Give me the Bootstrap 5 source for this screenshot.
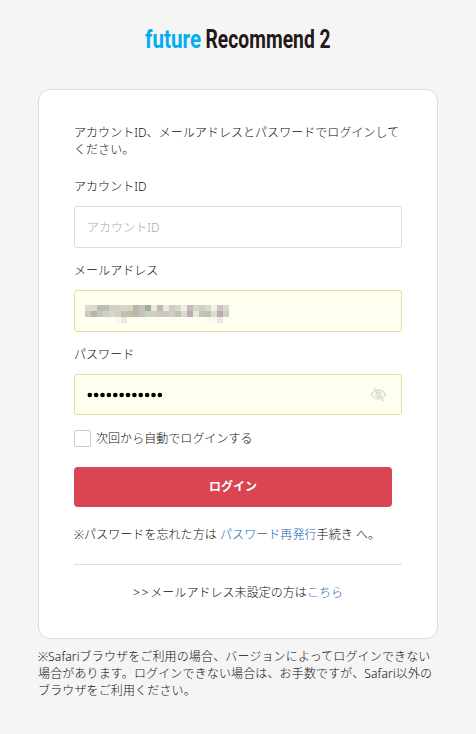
<!DOCTYPE html>
<html lang="ja">
<head>
<meta charset="utf-8">
<meta name="viewport" content="width=device-width, initial-scale=1">
<title>future Recommend 2</title>
<link href="https://cdn.jsdelivr.net/npm/bootstrap@5.3.0/dist/css/bootstrap.min.css" rel="stylesheet">
<style>
body{background:#f5f5f5;color:#0c0c0c;font:300 12px/17px "Noto Sans","Noto Sans CJK JP",sans-serif;letter-spacing:.05px}
.login-wrap{width:400px}
.brand-logo{height:89px;padding-top:24px}
.login-panel{height:550px;border:1px solid #ddd;border-radius:12px;padding:34px 35px 0}
.intro{height:34px;margin-bottom:20px;white-space:nowrap}
.field-label{height:17px;margin-bottom:11px}
.login-panel .form-control{height:42px;border:1px solid #ddd;border-radius:3px;padding:0 12px;font-size:12px;font-weight:300;color:#000;box-shadow:none;letter-spacing:inherit}
.login-panel .form-control::placeholder{color:#aaa}
.login-panel .filled{background:#ffffef;border-color:#e5dea0}
.field{margin-bottom:14px}
.login-panel .pass-box{height:41px;padding-right:14px}
.login-panel .masked-mail{padding:5px 0 0 10px}
.remember{height:17px;margin-top:15px;margin-bottom:20px;gap:5px}
.remember .form-check-input{width:17px;height:17px;border:1px solid #ccc;border-radius:2px}
.btn-login{width:318px;height:40px;background:#da4453;color:#fff;border:0;border-radius:4px;font-size:12px;font-weight:700;padding:0}
.btn-login:hover{background:#c93b49;color:#fff}
a{color:#1266b0;text-decoration:none}
.forgot{margin-top:19px;letter-spacing:.07px}
.rule{border-top:1px solid #ddd;margin-top:21px;padding-top:19px}
.arrows{letter-spacing:1.8px}
.browser-note{margin-top:9px;white-space:nowrap;letter-spacing:.14px}
</style>
</head>
<body>
<main class="login-wrap mx-auto">
  <header class="brand-logo d-flex justify-content-center">
    <svg width="192" height="34" overflow="visible" font-family="Roboto, sans-serif" font-weight="700" font-size="25" aria-label="future Recommend 2">
      <text transform="translate(3 24) scale(.79 1)" fill="#00aeef" textLength="71" lengthAdjust="spacingAndGlyphs">future</text>
      <text transform="translate(63.5 24) scale(.84 1)" fill="#231815" textLength="149" lengthAdjust="spacingAndGlyphs">Recommend 2</text>
    </svg>
  </header>
  <form class="login-panel bg-white">
    <p class="intro">アカウントID、メールアドレスとパスワードでログインして<br>ください。</p>
    <div class="field">
      <label class="field-label d-block" for="account">アカウントID</label>
      <input id="account" class="form-control" type="text" placeholder="アカウントID">
    </div>
    <div class="field">
      <div class="field-label">メールアドレス</div>
      <div class="form-control filled masked-mail d-flex align-items-center">
        <svg id="mosaic" width="144" height="18" viewBox="0 0 24 3" shape-rendering="crispEdges" aria-hidden="true"></svg>
      </div>
    </div>
    <div class="field">
      <div class="field-label">パスワード</div>
      <div class="form-control filled pass-box d-flex align-items-center justify-content-between">
        <svg width="78" height="6" viewBox="0 0 78 6" aria-label="password"><path d="M2.8 3H74" fill="none" stroke="#000" stroke-width="4.6" stroke-linecap="round" stroke-dasharray="0 6.37"/></svg>
        <svg width="17" height="16" viewBox="0 0 17 16" fill="none" stroke="#dadad6" stroke-width="1.4" stroke-linecap="round"><path d="M1.5 7.5Q4.3 3 8.5 3T15.5 7.5Q12.7 12 8.5 12T1.5 7.5Z"/><circle cx="8.5" cy="7.5" r="2.5"/><path d="M4 1.5L13 13.5"/></svg>
      </div>
    </div>
    <div class="remember d-flex align-items-center">
      <input id="remember" class="form-check-input m-0 shadow-none" type="checkbox">
      <label for="remember">次回から自動でログインする</label>
    </div>
    <button class="btn btn-login d-block" type="button">ログイン</button>
    <p class="mb-0 forgot">※パスワードを忘れた方は <a href="#">パスワード再発行</a>手続き へ。</p>
    <div class="rule text-center"><span class="arrows">&gt;&gt;</span>メールアドレス未設定の方は<a href="#">こちら</a></div>
  </form>
  <p class="browser-note mb-0">※Safariブラウザをご利用の場合、バージョンによってログインできない<br>場合があります。ログインできない場合は、お手数ですが、Safari以外の<br>ブラウザをご利用ください。</p>
</main>
<script src="https://cdn.jsdelivr.net/npm/bootstrap@5.3.0/dist/js/bootstrap.bundle.min.js"></script>
<script>
// Colour cells that obscure the saved address, one string per row.
const rows = [
  'dedccb d9dbce b6beb1 c3bdb9 d0d1c9 ced2bf d9d5c8 d7d3c5 c0b6a8 c1c5be a1ac9e ede6d8 bcb8ba eee8dc ceccca d5d8ca f0eedf cab7b9 d0dace d0cfc2 d7d9c4 f0f2e8 d1c1bf d6dbd1',
  'cdcab9 b8b3ae bfc8bf d0cec7 d3d8ca dacbc5 bfc0b3 bdbeb1 bfb6aa c0c4bf cbd0be cdcdc0 d5c4bc cfc9bd d2cac7 c0c1b7 dedaca b5aeb0 e2ecd9 c5c2bb bec1b1 d7e0cf bea9ab cbd1c8',
  '- - - - - fafae9 e7e8df - - - - - - - - - - - - - fbfbeb f8f8e9 e7e8df -'
];
document.getElementById('mosaic').innerHTML = rows.map((r, y) => r.split(' ').map((c, x) =>
  c === '-' ? '' : `<rect x="${x}" y="${y}" width="1" height="1" fill="#${c}"/>`).join('')).join('');
</script>
</body>
</html>
